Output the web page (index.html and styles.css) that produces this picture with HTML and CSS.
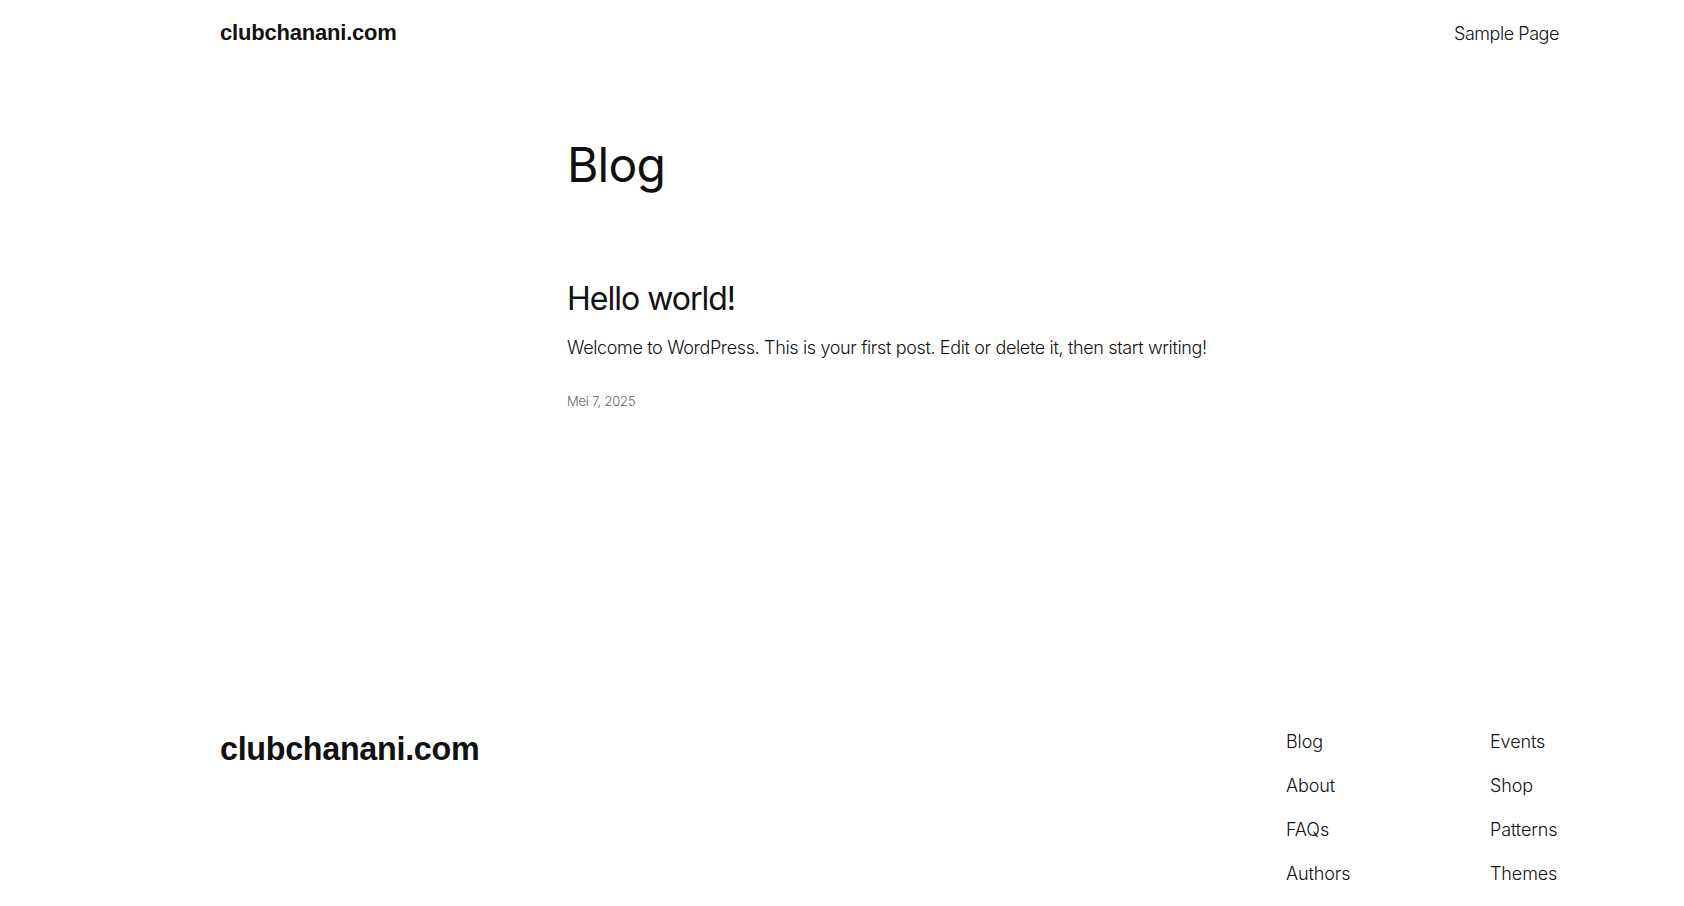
FILE: index.html
```html
<!DOCTYPE html>
<html lang="id">
<head>
<meta charset="utf-8">
<title>Blog – clubchanani.com</title>
<link rel="stylesheet" href="styles.css">
</head>
<body>
<div class="page">
  <header class="site-header">
    <a class="site-title" href="#">clubchanani.com</a>
    <nav class="top-nav"><a href="#">Sample Page</a></nav>
  </header>
  <main class="main">
    <div class="content">
      <h1 class="page-title">Blog</h1>
      <article class="post">
        <h2 class="post-title">Hello world!</h2>
        <p class="excerpt">Welcome to WordPress. This is your first post. Edit or delete it, then start writing!</p>
        <div class="post-date">Mei 7, 2025</div>
      </article>
    </div>
  </main>
  <footer class="site-footer">
    <a class="footer-title" href="#">clubchanani.com</a>
    <div class="footer-nav">
      <ul class="footer-col">
        <li><a href="#">Blog</a></li>
        <li><a href="#">About</a></li>
        <li><a href="#">FAQs</a></li>
        <li><a href="#">Authors</a></li>
      </ul>
      <ul class="footer-col">
        <li><a href="#">Events</a></li>
        <li><a href="#">Shop</a></li>
        <li><a href="#">Patterns</a></li>
        <li><a href="#">Themes</a></li>
      </ul>
    </div>
  </footer>
</div>
</body>
</html>
```
FILE: styles.css
```css
* { box-sizing: border-box; }
html, body { margin: 0; padding: 0; background: #fff; }
body {
  font-family: Inter, "Open Sans", sans-serif;
  font-weight: 300;
  color: #111;
  -webkit-font-smoothing: antialiased;
}
a { color: inherit; text-decoration: none; }
.page {
  padding: 0 125px 0 220px;
}
.site-header {
  display: flex;
  justify-content: space-between;
  align-items: center;
  height: 66px;
}
.site-title {
  font-family: "Liberation Sans", Arial, sans-serif;
  font-weight: 700;
  font-size: 22px;
  letter-spacing: -0.2px;
}
.top-nav a {
  font-size: 18px;
  letter-spacing: -0.45px;
}
.main {
  display: flex;
  justify-content: center;
  height: 663px;
}
.content { width: 645px; }
.page-title {
  margin: 70px 0 0;
  font-size: 48px;
  font-weight: 400;
  line-height: 1.2;
  letter-spacing: -0.8px;
}
.post { margin-top: 86px; }
.post-title {
  margin: 0;
  font-size: 32px;
  font-weight: 400;
  line-height: 1.2;
  letter-spacing: -1px;
}
.excerpt {
  margin: 16px 0 0;
  font-size: 18px;
  line-height: 1.5;
  letter-spacing: -0.35px;
}
.post-date {
  margin-top: 32px;
  font-size: 13px;
  color: #666;
  letter-spacing: -0.2px;
}
.site-footer {
  display: flex;
  justify-content: space-between;
  align-items: flex-start;
}
.footer-title {
  font-family: "Liberation Sans", Arial, sans-serif;
  font-weight: 700;
  font-size: 32.3px;
  letter-spacing: -0.3px;
  margin-top: 2px;
}
.footer-nav {
  display: flex;
  width: 273px;
  margin-top: 2px;
}
.footer-col {
  list-style: none;
  margin: 0;
  padding: 0;
  display: flex;
  flex-direction: column;
  gap: 22px;
}
.footer-col li {
  font-size: 18px;
  line-height: 22px;
  letter-spacing: -0.1px;
  white-space: nowrap;
}
.footer-col:first-child { width: 204px; flex: none; }
```
